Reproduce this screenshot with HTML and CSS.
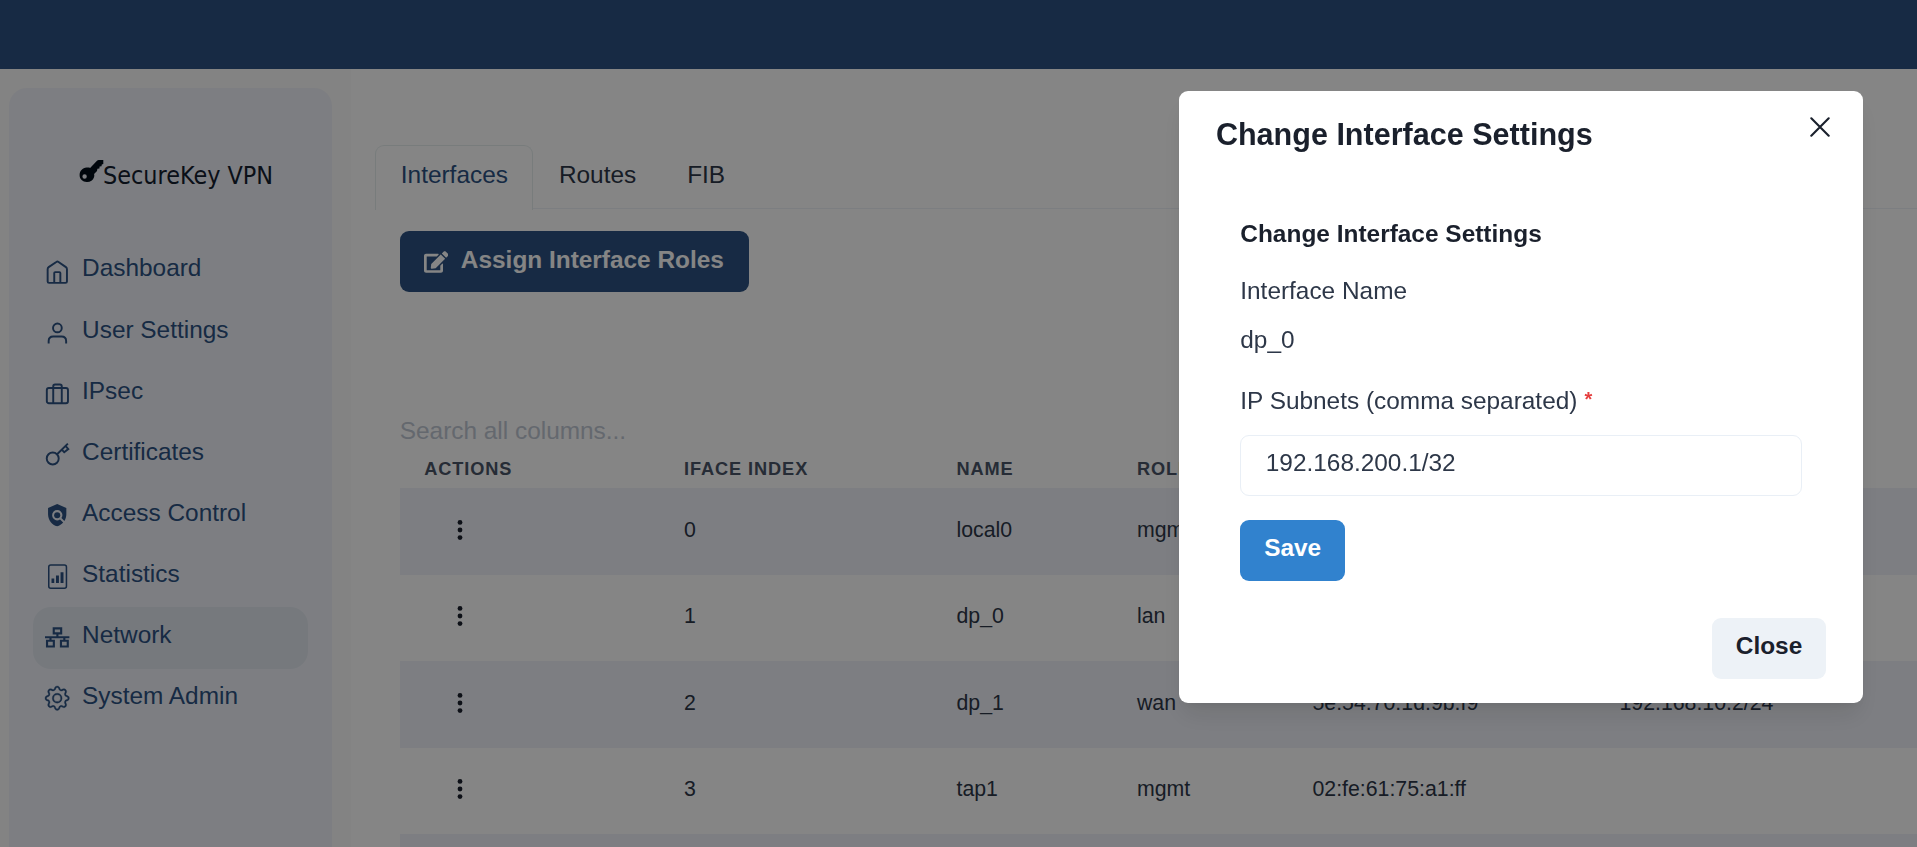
FILE: index.html
```html
<!DOCTYPE html>
<html lang="en">
<head>
<meta charset="utf-8">
<title>SecureKey VPN</title>
<link rel="stylesheet" href="styles.css">
</head>
<body>
<div class="app">
  <header class="topbar"></header>
  <div class="body">
    <div class="side">
      <aside class="sidebar">
        <div class="logo">
          <svg class="logo-key" viewBox="0 0 25 24"><path fill-rule="evenodd" d="M7.600 8.600c1.500-.2 2.500-.1 3.500.3L18 1.700c.5-.5 1-.7 1.800-.7h4.500v4l-1.500.6-.3 1.700-1.900.2-.2 1.900-2 .3-.4 2.300-2.900 2.900c.3 1 .3 2 0 3-1 3.400-4 5.300-7.400 5.100C3.700 22.800.7 20 .6 16.200.5 12.200 3.500 9.100 7.600 8.600zM5.600 15.300a2.200 2.200 0 1 0 .01 4.400 2.200 2.200 0 0 0 0-4.400z"/></svg>
          <span class="logo-text">SecureKey VPN</span>
        </div>
        <nav class="nav">
          <a class="nav-item"><svg class="ico line" viewBox="0 0 24 24"><path d="M2.600 10c0-.9.300-1.500 1-2L11.100 2.900c.7-.5 1.500-.5 2.200 0L20.600 8c.7.500 1 1.100 1 2V22.100c0 .9-.5 1.400-1.400 1.400H4c-.9 0-1.400-.5-1.400-1.400zM9.100 23.500v-9.700c0-.6.300-.9.900-.9h4.200c.6 0 .9.300.9.900v9.700"/></svg><span>Dashboard</span></a>
          <a class="nav-item"><svg class="ico line" viewBox="0 0 24 24"><circle cx="12.200" cy="7.800" r="4.300"/><path d="M3.600 23.100v-2.400c0-2.800 1.700-4.500 4.500-4.500h8.200c2.800 0 4.500 1.700 4.500 4.500v2.400"/></svg><span>User Settings</span></a>
          <a class="nav-item"><svg class="ico line" viewBox="0 0 24 24"><rect x="1.800" y="6.900" width="20.800" height="15" rx="2"/><path d="M8.100 21.900V5.300c0-1.200.6-1.800 1.800-1.800h4.800c1.200 0 1.800.6 1.800 1.800v16.600"/></svg><span>IPsec</span></a>
          <a class="nav-item"><svg class="ico line" viewBox="0 0 24 24"><circle cx="7.600" cy="16.200" r="5.900"/><path d="M11.900 12 22.500 1.600M16.500 7.500l2.400 2.600 4-3.200-2.500-2.800"/></svg><span>Certificates</span></a>
          <a class="nav-item"><svg class="ico" viewBox="0 0 24 24"><path d="M21 5l-9-4-9 4v6c0 5.550 3.840 10.740 9 12 2.300-.56 4.330-1.900 5.880-3.710l-3.120-3.120a4.994 4.994 0 0 1-6.290-.64 5.003 5.003 0 0 1 0-7.070 5.003 5.003 0 0 1 7.070 0 5.006 5.006 0 0 1 .64 6.290l2.900 2.900C20.290 15.690 21 13.380 21 11V5z"/><circle cx="12" cy="12" r="3"/></svg><span>Access Control</span></a>
          <a class="nav-item"><svg class="ico" viewBox="0 0 24 24"><rect x="3.700" y=".9" width="17.400" height="23" rx="2" fill="none" stroke="currentColor" stroke-width="1.500"/><path d="M6.400 14.300h2.700v4.500H6.400zM10.800 11.300h2.900v7.500h-2.900zM15.300 8h2.900v10.800h-2.900z"/></svg><span>Statistics</span></a>
          <a class="nav-item active"><svg class="ico" viewBox="0 0 24 24"><path d="M8.600 3.300h7.300v5H8.600zM2 15.500h6.700v5.600H2zM15.700 15.500h6.700v5.600h-6.700zM0 12h24M12.200 8.300V12M5.400 12v3.500M19 12v3.500" fill="none" stroke="currentColor" stroke-width="2.100"/></svg><span>Network</span></a>
          <a class="nav-item"><svg class="ico gear" viewBox="0 0 16 16"><path d="M8 4.754a3.246 3.246 0 1 0 0 6.492 3.246 3.246 0 0 0 0-6.492zM5.754 8a2.246 2.246 0 1 1 4.492 0 2.246 2.246 0 0 1-4.492 0z"/><path d="M9.796 1.343c-.527-1.790-3.065-1.790-3.592 0l-.094.319a.873.873 0 0 1-1.255.52l-.292-.16c-1.640-.892-3.433.902-2.540 2.541l.159.292a.873.873 0 0 1-.52 1.255l-.319.094c-1.790.527-1.790 3.065 0 3.592l.319.094a.873.873 0 0 1 .52 1.255l-.16.292c-.892 1.640.901 3.434 2.541 2.540l.292-.159a.873.873 0 0 1 1.255.52l.094.319c.527 1.790 3.065 1.790 3.592 0l.094-.319a.873.873 0 0 1 1.255-.52l.292.16c1.640.893 3.434-.902 2.540-2.541l-.159-.292a.873.873 0 0 1 .52-1.255l.319-.094c1.790-.527 1.790-3.065 0-3.592l-.319-.094a.873.873 0 0 1-.52-1.255l.16-.292c.893-1.640-.902-3.433-2.541-2.540l-.292.159a.873.873 0 0 1-1.255-.52l-.094-.319zm-2.633.283c.246-.835 1.428-.835 1.674 0l.094.319a1.873 1.873 0 0 0 2.693 1.115l.291-.16c.764-.415 1.600.42 1.184 1.185l-.159.292a1.873 1.873 0 0 0 1.116 2.692l.318.094c.835.246.835 1.428 0 1.674l-.319.094a1.873 1.873 0 0 0-1.115 2.693l.16.291c.415.764-.42 1.600-1.185 1.184l-.291-.159a1.873 1.873 0 0 0-2.693 1.116l-.094.318c-.246.835-1.428.835-1.674 0l-.094-.319a1.873 1.873 0 0 0-2.692-1.115l-.292.16c-.764.415-1.600-.42-1.184-1.185l.159-.291A1.873 1.873 0 0 0 1.945 8.930l-.319-.094c-.835-.246-.835-1.428 0-1.674l.319-.094A1.873 1.873 0 0 0 3.060 4.377l-.16-.292c-.415-.764.42-1.600 1.185-1.184l.292.159a1.873 1.873 0 0 0 2.692-1.115l.094-.319z"/></svg><span>System Admin</span></a>
        </nav>
      </aside>
    </div>
    <main class="main">
      <div class="tabs">
        <button class="tab selected">Interfaces</button>
        <button class="tab">Routes</button>
        <button class="tab">FIB</button>
      </div>
      <section class="panel">
        <button class="btn btn-roles"><svg class="edit" viewBox="0 0 576 512"><path d="M402.600 83.200l90.200 90.200c3.800 3.800 3.800 10 0 13.800L274.400 405.600l-92.800 10.300c-12.400 1.400-22.900-9.100-21.500-21.500l10.300-92.800L388.800 83.200c3.800-3.800 10-3.800 13.800 0zm162-22.900l-48.800-48.800c-15.200-15.200-39.900-15.200-55.200 0l-35.400 35.400c-3.800 3.800-3.800 10 0 13.800l90.200 90.200c3.800 3.800 10 3.800 13.800 0l35.400-35.400c15.200-15.300 15.200-40 0-55.200zM384 346.200V448H64V128h229.800c3.200 0 6.200-1.300 8.500-3.500l40-40c7.600-7.600 2.200-20.500-8.500-20.500H48C21.500 64 0 85.500 0 112v352c0 26.500 21.500 48 48 48h352c26.500 0 48-21.500 48-48V306.200c0-10.700-12.900-16-20.500-8.500l-40 40c-2.200 2.300-3.500 5.300-3.500 8.500z"/></svg><span>Assign Interface Roles</span></button>
        <input class="search" type="text" placeholder="Search all columns...">
        <table class="table">
          <colgroup><col class="c1"><col class="c2"><col class="c3"><col class="c4"><col class="c5"><col class="c6"></colgroup>
          <thead><tr><th>Actions</th><th>Iface Index</th><th>Name</th><th>Role</th><th></th><th></th></tr></thead>
          <tbody>
            <tr><td><svg class="dots" viewBox="0 0 8 24"><circle cx="4" cy="4.400" r="2.400"/><circle cx="4" cy="12" r="2.400"/><circle cx="4" cy="19.600" r="2.400"/></svg></td><td>0</td><td>local0</td><td>mgmt</td><td></td><td></td></tr>
            <tr><td><svg class="dots" viewBox="0 0 8 24"><circle cx="4" cy="4.400" r="2.400"/><circle cx="4" cy="12" r="2.400"/><circle cx="4" cy="19.600" r="2.400"/></svg></td><td>1</td><td>dp_0</td><td>lan</td><td></td><td></td></tr>
            <tr><td><svg class="dots" viewBox="0 0 8 24"><circle cx="4" cy="4.400" r="2.400"/><circle cx="4" cy="12" r="2.400"/><circle cx="4" cy="19.600" r="2.400"/></svg></td><td>2</td><td>dp_1</td><td>wan</td><td>5e:54:70:1d:9b:f9</td><td>192.168.10.2/24</td></tr>
            <tr><td><svg class="dots" viewBox="0 0 8 24"><circle cx="4" cy="4.400" r="2.400"/><circle cx="4" cy="12" r="2.400"/><circle cx="4" cy="19.600" r="2.400"/></svg></td><td>3</td><td>tap1</td><td>mgmt</td><td>02:fe:61:75:a1:ff</td><td></td></tr>
            <tr><td></td><td></td><td></td><td></td><td></td><td></td></tr>
          </tbody>
        </table>
      </section>
    </main>
  </div>
</div>
<div class="overlay">
  <div class="modal" role="dialog">
    <div class="modal-head">
      <h2 class="modal-title">Change Interface Settings</h2>
      <svg class="x" viewBox="0 0 20 20"><path d="M1.300 1.300 18.700 18.700M18.700 1.300 1.300 18.700"/></svg>
    </div>
    <form class="form">
      <h3 class="form-title">Change Interface Settings</h3>
      <p class="label">Interface Name</p>
      <p class="value">dp_0</p>
      <label class="label-ip">IP Subnets (comma separated)<span class="req">*</span></label>
      <input class="field" type="text" value="192.168.200.1/32">
      <button class="btn btn-save" type="button"><span>Save</span></button>
    </form>
    <div class="modal-foot"><button class="btn btn-close"><span>Close</span></button></div>
  </div>
</div>
</body>
</html>
```

FILE: styles.css
```css
* { box-sizing: border-box; margin: 0; padding: 0; }
html { font-size: 24.4px; }
body {
  height: 847px;
  overflow: hidden;
  background: #fff;
  color: #2d3748;
  font-family: "Liberation Sans", Arial, sans-serif;
  font-size: 24.4px;
  line-height: 36px;
}
button, input { font: inherit; color: inherit; border: 0; background: none; outline: 0; }
.app { height: 847px; overflow: hidden; }
.topbar { height: 69.400px; background: #2c5282; }
.body { display: flex; height: 778px; }

.side { width: 351px; flex: none; padding: 18.500px 0 0 9px; background: #fcfcfb; }
.sidebar { width: 323px; height: 800px; padding: 0 24px; border-radius: 18px; background: #f0f2f9; }
.logo { display: flex; height: 153px; padding: 71px 0 0 46px; }
.logo-key { width: 25px; height: 24px; flex: none; fill: #000c18; }
.logo-text { margin-left: -1px; line-height: 34px; font-family: "DejaVu Sans Condensed", "DejaVu Sans", sans-serif; font-stretch: condensed; font-size: 24.900px; color: #14202f; white-space: nowrap; }
.nav-item { display: flex; align-items: center; height: 61.100px; padding-left: 11.500px; gap: 13.200px; border-radius: 18px; color: #2c5282; }
.nav-item.active { background: #e2e8f0; }
.nav-item span { padding-bottom: 6px; }
.ico { width: 24.400px; height: 24.400px; margin-bottom: 1px; flex: none; fill: currentColor; overflow: visible; }
.ico.line { fill: none; stroke: currentColor; stroke-width: 1.900; }
.gear { stroke: currentColor; stroke-width: .2; }

.main { flex: 1; min-width: 0; padding: 75.900px 0 0 24.300px; }
.tabs { display: flex; height: 64.200px; border-bottom: 1.500px solid #edf2f7; }
.tab { height: 64px; padding: 0 24.500px 5.500px; border: 1.500px solid transparent; border-bottom: 0; }
.tab.selected { height: 65px; padding-bottom: 6.500px; border-color: #e6eeee; border-radius: 9px 9px 0 0; background: #fff; color: #2c5282; }
.panel { padding: 21.800px 0 0 24.450px; }
.btn { display: inline-flex; align-items: center; height: 61px; padding: 0 24.200px; border-radius: 9px; font-weight: 700; color: #1a202c; }
.btn span { padding-bottom: 6px; }
.btn-roles { display: flex; width: 349.300px; background: #2c5282; color: #fff; white-space: nowrap; }
.btn-roles span { padding-bottom: 4.500px; }
.edit { width: 24.450px; height: 22px; margin-right: 12.500px; flex: none; fill: currentColor; }
.search { display: block; width: 600px; height: 36px; margin-top: 120.500px; }
.search::placeholder { color: #c0c8d4; opacity: 1; }
.table { width: 1640px; border-collapse: collapse; table-layout: fixed; }
.c1 { width: 259.800px; }
.c2 { width: 272.500px; }
.c3 { width: 180.500px; }
.c4 { width: 175.500px; }
.c5 { width: 307px; }
.table th { height: 39.500px; padding: 7.900px 0 0 24.450px; line-height: 24px; text-align: left; text-transform: uppercase; font-size: 18.200px; letter-spacing: .05em; color: #4a5568; vertical-align: top; }
.table td { height: 86.500px; padding: 0 0 4px 24.450px; font-size: 21.300px; vertical-align: middle; white-space: nowrap; }
.table tbody tr:nth-child(odd) { background: #f0f2f9; }
.dots { display: block; width: 8px; height: 24px; margin-left: 32.200px; fill: #1a202c; }

.overlay { position: fixed; inset: 0; background: rgba(0, 0, 0, .48); }
.modal {
  position: absolute; left: 1179.200px; top: 90.700px;
  width: 683.900px; height: 612.600px;
  border-radius: 9px; background: #fff;
  box-shadow: 0 15px 23px -4.500px rgba(0, 0, 0, .1), 0 6px 9px -3px rgba(0, 0, 0, .05);
}
.modal-head { display: flex; justify-content: space-between; padding: 22px 33.300px 0 36.700px; }
.modal-title { font-size: 30.550px; line-height: 42px; color: #1a202c; }
.x { width: 20px; height: 20px; margin-top: 4.800px; fill: none; stroke: #1a202c; stroke-width: 2.100; stroke-linecap: round; }
.form { padding: 61.500px 61.100px 0; }
.form-title { font-size: 24.450px; line-height: 36px; color: #1a202c; }
.label { margin-top: 21px; }
.value { margin-top: 13px; }
.label-ip { display: block; margin-top: 25px; }
.req { margin-left: 7px; color: #e53e3e; font-size: 20px; font-weight: 700; line-height: 20px; vertical-align: 3px; }
.field { display: block; width: 561.500px; height: 61px; margin-top: 15.900px; padding: 0 24.500px 5.500px; border: 1.500px solid #e9eff6; border-radius: 9px; }
.btn-save { margin-top: 24.400px; padding: 0 23.900px; background: #3182ce; color: #fff; }
.modal-foot { display: flex; justify-content: flex-end; padding: 36.700px 36.700px 0 0; }
.btn-close { background: #edf2f7; }
.btn-close span { padding-bottom: 5px; }
```
